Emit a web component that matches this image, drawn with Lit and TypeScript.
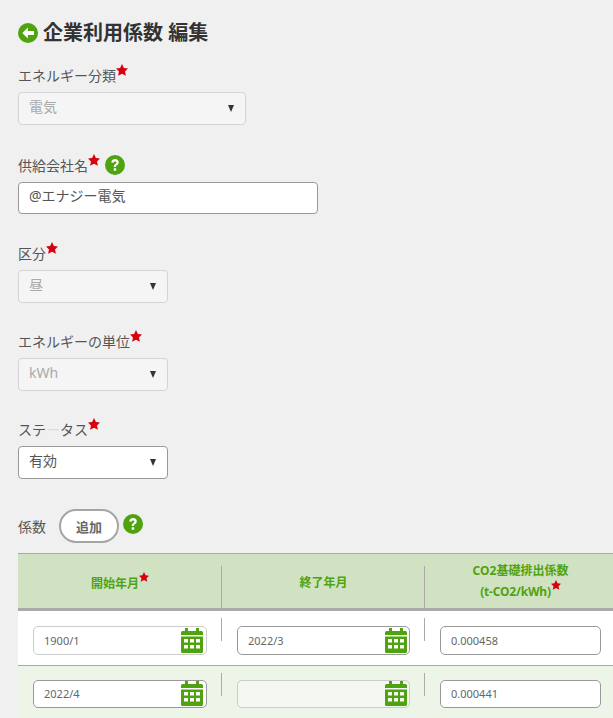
import { LitElement, html, css } from "lit";
import { customElement } from "lit/decorators.js";

const star = html`<svg class="star" viewBox="0 0 24 24"><polygon points="12,0 15.800,7.800 24,8.800 18,14.800 19.800,23.500 12,19.300 4.200,23.500 6,14.800 0,8.800 8.200,7.800" fill="#d8000f"/></svg>`;
const help = html`<svg class="help" viewBox="0 0 20 20"><circle cx="10" cy="10" r="10" fill="#4fa30f"/><path d="M6.300 7.600c0-2.200 1.600-3.500 3.800-3.500s3.700 1.300 3.700 3.200c0 1.500-.9 2.300-1.900 3-.7.500-1 .8-1 1.700H8.700c0-1.600.5-2.300 1.500-3 .8-.6 1.200-.9 1.200-1.500 0-.7-.5-1.100-1.300-1.100-.9 0-1.400.5-1.500 1.300z" fill="#fff"/><rect x="8.700" y="13.200" width="2.500" height="2.500" rx=".4" fill="#fff"/></svg>`;
const cal = html`<svg class="cal" viewBox="0 0 22 25"><path fill="#4fa30f" d="M4 0h3v3h8V0h3v3h2.500A1.500 1.500 0 0 1 22 4.500V7H0V4.500A1.500 1.500 0 0 1 1.500 3H4z"/><path fill="#4fa30f" fill-rule="evenodd" d="M0 8.500h22V23.500a1.500 1.500 0 0 1-1.500 1.500H1.500A1.500 1.500 0 0 1 0 23.500zM3 11v3.500h4V11zm6 0v3.500h4V11zm6 0v3.500h4V11zM3 17v3.500h4V17zm6 0v3.500h4V17zm6 0v3.500h4V17z"/></svg>`;

@customElement("app-root")
export class AppRoot extends LitElement {
  static styles = css`
    :host { display: block; height: 718px; overflow: hidden; background: #f0f0f0; color: #333;
      font-family: "Noto Sans", "Noto Sans CJK JP", sans-serif; font-size: 14px; }
    .page { padding: 0 0 0 18px; display: flex; flex-direction: column; }
    h1 { margin: 0; padding-top: 19px; height: 28px; display: flex; align-items: center; gap: 5px;
      font-size: 20px; line-height: 28px; font-weight: 700; color: #333; }
    .back { width: 20px; height: 20px; flex: none; }
    .field { display: flex; flex-direction: column; }
    .label { display: flex; align-items: flex-start; height: 22px; line-height: 22px; color: #555; margin-bottom: 5px; }
    .star { width: 12px; height: 12px; flex: none; margin-top: -1px; }
    .help { width: 20px; height: 20px; margin-left: 5px; flex: none; }
    .select, .input { box-sizing: border-box; height: 33px; border: 1px solid #999; border-radius: 4px; background: #fff;
      display: flex; align-items: center; justify-content: space-between; padding: 0 11px 0 10px; color: #555; }
    .val { position: relative; top: -1px; line-height: 20px; margin-top: -2px; }
    .select.dis { background: #f5f5f5; border-color: #d4d4d4; color: #aaa; }
    .arrow { width: 0; height: 0; border-left: 3.500px solid transparent; border-right: 3.500px solid transparent; border-top: 7px solid #333; }
    .faint { color: #dcdcdc; }
    .coef { display: flex; align-items: center; margin-top: 30px; height: 34px; color: #555; }
    .add { box-sizing: border-box; width: 60px; height: 34px; margin-left: 13px; border: 2px solid #a5a5a5; border-radius: 17px; background: #fff;
      display: flex; align-items: center; justify-content: center; font-size: 13px; font-weight: 700; color: #666; }
    .coef .help { margin-left: 4px; margin-top: -5px; }
    .table { margin-top: 10px; width: 595px; display: grid; grid-template-columns: 204px 203px 188px; }
    .th { background: #d0e2c2; border-top: 1px solid #aaa; border-bottom: 3px solid #aaa;
      display: flex; align-items: center; justify-content: center; text-align: center; color: #4fa30f; font-size: 12px; font-weight: 700; line-height: 19px; position: relative; padding-top: 2px; box-sizing: content-box; height: 52px; }
    .th::after { content: ""; position: absolute; right: 0; top: 12px; bottom: 0; width: 1px; background: #aaa; }
    .th.last::after { display: none; }
    .th.last { padding-left: 3px; padding-top: 0; height: 54px; }
    .th .star { width: 10px; height: 10px; margin: 0; vertical-align: 6px; }
    .th .wrap { display: inline-block; }
    .tight { letter-spacing: -0.2px; }
    .td { box-sizing: border-box; position: relative; border-bottom: 1px solid #aaa; padding: 15px 0 0 15px; height: 55px; background: #fff; }
    .td.alt { background: #edf4e8; border-bottom: 0; padding-top: 14px; height: 52px; }
    .td.div::after { content: ""; position: absolute; right: 0; top: 7px; height: 23px; width: 1px; background: #aaa; }
    .box { box-sizing: border-box; width: 174px; height: 29px; border: 1px solid #999; border-radius: 5px; background: #fff; color: #666;
      font-size: 11px; line-height: 27px; padding-left: 10px; position: relative; }
    .c2 .box { width: 173px; }
    .alt .box { height: 28px; line-height: 26px; }
    .box.dis { border-color: #ccc; }
    .alt .box.dis { background: #f5f8f2; }
    .box.num { width: 161px; }
    .cal { position: absolute; right: 3px; top: 1px; width: 22px; height: 25px; }
    .c2 .cal { right: 2px; }
    .alt .cal { top: 0; }
  `;

  private field(label: unknown, value: string, w: number, top: number, dis = true) {
    return html`<div class="field" style="margin-top:${top}px">
      <div class="label"><span>${label}</span>${star}</div>
      <div class="select ${dis ? "dis" : ""}" style="width:${w}px"><span class="val">${value}</span><span class="arrow"></span></div>
    </div>`;
  }

  private dateBox(v: string, dis: boolean) {
    return html`<div class="box ${dis ? "dis" : ""}">${v}${cal}</div>`;
  }

  render() {
    return html`<div class="page">
      <h1><svg class="back" viewBox="0 0 20 20"><circle cx="10" cy="10" r="10" fill="#4fa30f"/><path d="M9.800 4.500 4.300 10l5.500 5.500V12H16V8H9.800z" fill="#fff"/></svg>企業利用係数 編集</h1>
      ${this.field("エネルギー分類", "電気", 228, 18)}
      <div class="field" style="margin-top:30px">
        <div class="label"><span>供給会社名</span>${star}${help}</div>
        <div class="input" style="width:300px;height:32px"><span class="val">@エナジー電気</span></div>
      </div>
      ${this.field("区分", "昼", 150, 29)}
      ${this.field("エネルギーの単位", "kWh", 150, 28)}
      ${this.field(html`ステ<span class="faint">ー</span>タス`, "有効", 150, 28, false)}
      <div class="coef">係数<div class="add">追加</div>${help}</div>
      <div class="table">
        <div class="th"><span class="wrap">開始年月${star}</span></div>
        <div class="th"><span class="wrap">終了年月</span></div>
        <div class="th last"><span class="wrap">CO2基礎排出係数<br><span class="tight">(t-CO2/kWh)</span>${star}</span></div>
        <div class="td div">${this.dateBox("1900/1", true)}</div>
        <div class="td div c2">${this.dateBox("2022/3", false)}</div>
        <div class="td"><div class="box num">0.000458</div></div>
        <div class="td alt div">${this.dateBox("2022/4", false)}</div>
        <div class="td alt div c2">${this.dateBox("", true)}</div>
        <div class="td alt"><div class="box num">0.000441</div></div>
      </div>
    </div>`;
  }
}
